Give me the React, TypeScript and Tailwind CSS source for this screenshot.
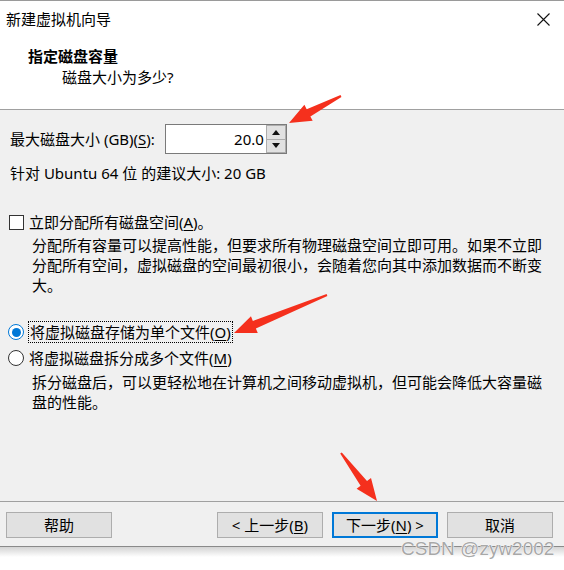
import React from "react";

const font = "font-['Noto_Sans','Noto_Sans_CJK_SC',sans-serif]";

function Arrow({ x1, y1, x2, y2 }: { x1: number; y1: number; x2: number; y2: number }) {
  // tapered red annotation arrow, tail at (x1,y1), head at (x2,y2)
  const dx = x2 - x1;
  const dy = y2 - y1;
  const len = Math.hypot(dx, dy);
  const ux = dx / len;
  const uy = dy / len;
  const px = -uy;
  const py = ux;
  const hb = 22; // head length
  const bx = x2 - ux * hb;
  const by = y2 - uy * hb;
  const pts = [
    [x1 + px * 1, y1 + py * 1],
    [bx + px * 4, by + py * 4],
    [bx + px * 9, by + py * 9],
    [x2, y2],
    [bx - px * 9, by - py * 9],
    [bx - px * 4, by - py * 4],
    [x1 - px * 1, y1 - py * 1],
  ]
    .map((p) => p.join(","))
    .join(" ");
  return <polygon points={pts} fill="#f5301d" />;
}

function U({ children }: { children: React.ReactNode }) {
  return <span className="underline underline-offset-2">{children}</span>;
}

function Btn({ children, primary }: { children: React.ReactNode; primary?: boolean }) {
  return (
    <div
      className={
        "w-[106px] h-[26px] flex items-center justify-center bg-[#e1e1e1] text-[15px] text-black " +
        (primary ? "border-2 border-[#0078d7]" : "border border-[#adadad]")
      }
    >
      {children}
    </div>
  );
}

export default function App() {
  return (
    <div className={"relative w-[564px] h-[570px] bg-white overflow-hidden text-black " + font}>
      <div className="border-t border-[#9a9a9a]">
        {/* title bar */}
        <div className="h-[37px] flex items-center justify-between pl-[6px] pr-[14px] text-[15px]">
          <span>新建虚拟机向导</span>
          <svg width="13" height="13" viewBox="0 0 13 13">
            <path d="M0.5 0.5 L12.5 12.5 M12.5 0.5 L0.5 12.5" stroke="#111" strokeWidth="1.1" />
          </svg>
        </div>
        {/* header */}
        <div className="h-[72px] pl-[28px] pt-[7px] border-b border-[#a0a0a0]">
          <div className="text-[15px] font-bold leading-[22px]">指定磁盘容量</div>
          <div className="text-[15px] leading-[20px] pl-[34px]">磁盘大小为多少?</div>
        </div>
        {/* body */}
        <div className="h-[392px] bg-[#f0f0f0] border-b border-[#a0a0a0] text-[15px] leading-[20px]">
          <div className="pt-[14px] pl-[10px] flex items-center gap-[10px]">
            <span>
              最大磁盘大小 (GB)(<U>S</U>):
            </span>
            <div className="flex h-[30px] border border-[#7a7a7a] bg-white">
              <div className="w-[100px] flex items-center justify-end pr-[2px]">20.0</div>
              <div className="w-[20px] flex flex-col">
                <div className="flex-1 bg-[#e1e1e1] border border-[#adadad] flex items-center justify-center">
                  <svg width="8" height="5" viewBox="0 0 8 5">
                    <path d="M0 5 L4 0 L8 5 Z" fill="#111" />
                  </svg>
                </div>
                <div className="flex-1 bg-[#e1e1e1] border border-[#adadad] border-t-0 flex items-center justify-center">
                  <svg width="8" height="5" viewBox="0 0 8 5">
                    <path d="M0 0 L4 5 L8 0 Z" fill="#111" />
                  </svg>
                </div>
              </div>
            </div>
          </div>
          <div className="pl-[10px] mt-[9px]">针对 Ubuntu 64 位 的建议大小: 20 GB</div>

          <div className="pl-[9px] mt-[29px] flex items-center gap-[5px]">
            <div className="w-[15px] h-[15px] border border-[#333] bg-white" />
            <span>
              立即分配所有磁盘空间(<U>A</U>)。
            </span>
          </div>
          <div className="pl-[32px] pr-[14px] mt-[3px]">
            分配所有容量可以提高性能，但要求所有物理磁盘空间立即可用。如果不立即分配所有空间，虚拟磁盘的空间最初很小，会随着您向其中添加数据而不断变大。
          </div>

          <div className="pl-[8px] mt-[26px] flex items-center gap-[4px]">
            <div className="w-[16px] h-[16px] rounded-full border border-[#0078d7] bg-white flex items-center justify-center">
              <div className="w-[9px] h-[9px] rounded-full bg-[#0078d7]" />
            </div>
            <span className="border border-dotted border-black px-[1px]">
              将虚拟磁盘存储为单个文件(<U>O</U>)
            </span>
          </div>
          <div className="pl-[8px] mt-[5px] flex items-center gap-[5px]">
            <div className="w-[16px] h-[16px] rounded-full border border-[#333] bg-white" />
            <span>
              将虚拟磁盘拆分成多个文件(<U>M</U>)
            </span>
          </div>
          <div className="pl-[32px] pr-[14px] mt-[4px]">
            拆分磁盘后，可以更轻松地在计算机之间移动虚拟机，但可能会降低大容量磁盘的性能。
          </div>
        </div>
        {/* footer */}
        <div className="h-[45px] bg-[#f0f0f0] border-b border-[#8a8a8a] flex items-start pt-[10px] pl-[6px] pr-[11px]">
          <Btn>帮助</Btn>
          <div className="flex-1" />
          <div className="flex gap-[9px]">
            <Btn>
              &lt; 上一步(<U>B</U>)
            </Btn>
            <Btn primary>
              下一步(<U>N</U>) &gt;
            </Btn>
            <Btn>取消</Btn>
          </div>
        </div>
        <div className="h-[10px] bg-gradient-to-b from-[#d4d4d4] to-white" />
      </div>

      {/* annotation arrows */}
      <svg className="absolute inset-0 pointer-events-none" width="564" height="570">
        <Arrow x1={341} y1={96} x2={289} y2={123} />
        <Arrow x1={327} y1={295} x2={234} y2={333} />
        <Arrow x1={341} y1={453} x2={377} y2={501} />
      </svg>

      {/* watermark */}
      <div className="absolute left-[401px] top-[538px] text-[19px] leading-[22px] text-[#a8a8a8] font-['Liberation_Sans',sans-serif] [text-shadow:0_0_1px_#fff,0_0_1px_#fff,0_0_1px_#fff]">
        CSDN @zyw2002
      </div>
    </div>
  );
}
